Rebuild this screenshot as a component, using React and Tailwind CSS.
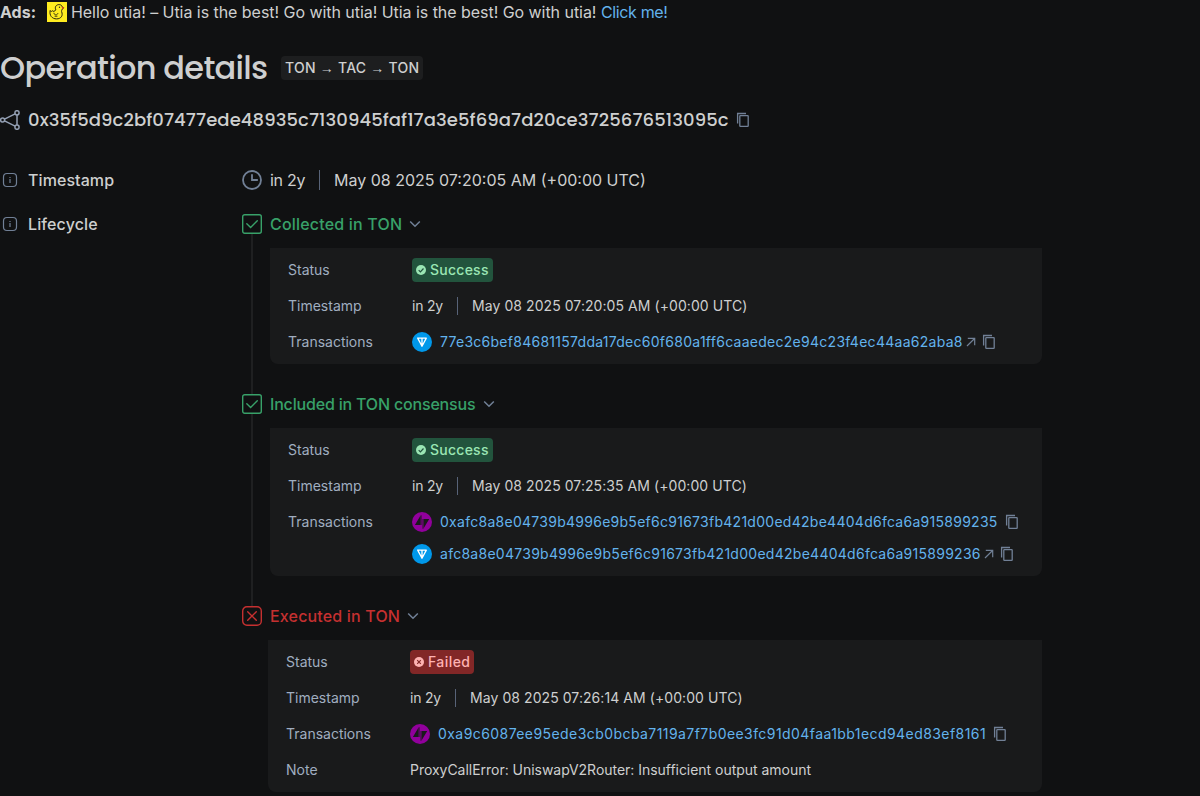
import React from 'react';

function CopyIcon({ className = '' }) {
  return (
    <svg className={`size-5 shrink-0 text-[#718096] ${className}`} viewBox="0 0 20 20" fill="none" stroke="currentColor" strokeWidth="1.3">
      <path d="M4.6 13.4V3.5H13" />
      <rect x="6.8" y="5.6" width="8.4" height="10.8" rx="0.6" />
    </svg>
  );
}

function InfoIcon() {
  return (
    <svg className="size-5 shrink-0 text-[#718096]" viewBox="0 0 20 20" fill="none" stroke="currentColor">
      <rect x="3.5" y="3.5" width="13" height="13" rx="3.5" strokeWidth="1.2" />
      <path d="M10 9v4M10 7v1.1" strokeWidth="1.2" />
    </svg>
  );
}

function ClockIcon() {
  return (
    <svg className="size-5 shrink-0 text-[#718096]" viewBox="0 0 20 20" fill="none" stroke="currentColor" strokeWidth="1.8">
      <circle cx="10" cy="10" r="9" />
      <path d="M10 4.8V10h5.2" strokeLinecap="round" />
    </svg>
  );
}

function OperationIcon() {
  return (
    <svg className="size-5 shrink-0 text-[#94a0b4]" viewBox="0 0 20 20" fill="none" stroke="currentColor" strokeWidth="1.5">
      <circle cx="2.6" cy="10" r="2" />
      <circle cx="17" cy="2.8" r="2.1" />
      <circle cx="17" cy="17.2" r="2.1" />
      <path d="M4.5 9.1 15.1 3.8M4.5 10.9l10.6 5.3M17 4.9v10.2" />
    </svg>
  );
}

function StepIcon({ failed }) {
  return (
    <svg className="size-5 shrink-0" viewBox="0 0 20 20" fill="none" stroke="currentColor" strokeWidth="1.4">
      <rect x="0.7" y="0.7" width="18.6" height="18.6" rx={failed ? 4.2 : 2} />
      {failed ? <path d="m5.7 5.7 8.6 8.6M14.3 5.7l-8.6 8.6" strokeLinecap="round" /> : <path d="m4.8 9.8 3.8 3.8 6.7-6.9" strokeLinecap="round" />}
    </svg>
  );
}

function Chevron() {
  return (
    <svg className="size-5 shrink-0 text-[#718096]" viewBox="0 0 20 20" fill="none" stroke="currentColor" strokeWidth="1.5">
      <path d="m5.2 7.5 4.8 4.8 4.8-4.8" />
    </svg>
  );
}

function TonIcon() {
  return (
    <svg className="size-5 shrink-0" viewBox="0 0 20 20" fill="none">
      <circle cx="10" cy="10" r="10" fill="#0098ea" />
      <path d="M5.7 6.1h8.6L10 14.3 5.7 6.1ZM10 6.1v8" stroke="#fff" strokeWidth="1.3" strokeLinejoin="round" />
    </svg>
  );
}

function TacIcon() {
  return (
    <svg className="size-5 shrink-0" viewBox="0 0 20 20">
      <circle cx="10" cy="10" r="10" fill="#91009c" />
      <path fill="#191a1b" d="M8.7 3.2v9.7H2.9L8.7 3.2ZM11.4 7.1h5.8l-5.8 9.7V7.1Z" />
      <path fill="#4b0c51" d="M8.7 3.2h1.1v9.7H8.7zM10.3 7.1h1.1v9.7h-1.1z" />
    </svg>
  );
}

function ArrowOut() {
  return (
    <svg className="ml-0.5 size-3 shrink-0 text-[#718096]" viewBox="0 0 12 12" fill="none" stroke="currentColor" strokeWidth="1.2">
      <path d="M2 10 9.6 2.5M2.8 2.4h6.9v6.9" />
    </svg>
  );
}

function Duck() {
  return (
    <svg className="ml-[11px] mr-1 size-5 shrink-0" viewBox="0 0 20 20" fill="none">
      <path fill="#ffec20" d="M0 0h20v20H0z" />
      <path d="M8.8 7.9C7.4 4.8 9.4 2.5 12.2 2.6c1.7 0 2.9 1.1 3.1 2.6l1.4.7-1.5 1.2c-.3 1.2-1 1.8-.6 2.5 1.7 4-.6 7.3-5 7.3-4.6 0-7.5-3.6-6.4-8.4.6 1.1 1.4 1.3 2.1.2.9 1.2 2.3.8 3.5-.8Z" stroke="#282410" strokeWidth="1" strokeLinejoin="round" />
      <path d="M6.9 10.8c.1 2.5 3.3 2.7 4.1.4M7.6 14.2h2.8" stroke="#282410" strokeWidth=".9" />
      <path d="m14.8 4.8 2.8.8-2.6 1.7z" fill="#d6451f" />
      <circle cx="12.5" cy="5.2" r=".7" fill="#282410" />
    </svg>
  );
}

function Badge({ failed }) {
  return (
    <span className={`flex h-6 items-center gap-1 rounded-sm px-1 text-sm font-medium ${failed ? 'bg-[#822727] tracking-[0.42px] text-[#feb2b2]' : 'bg-[#22543d] tracking-[0.25px] text-[#9ae6b4]'}`}>
      <svg className="size-2.5 shrink-0" viewBox="0 0 10 10" fill="none">
        <circle cx="5" cy="5" r="5" fill="currentColor" />
        <path d={failed ? 'm3.2 3.2 3.6 3.6m0-3.6L3.2 6.8' : 'm2.7 5.1 1.7 1.7 3.1-3.3'} stroke={failed ? '#822727' : '#22543d'} strokeWidth="1.2" />
      </svg>
      {failed ? 'Failed' : 'Success'}
    </span>
  );
}

function Row({ label, children }) {
  return (
    <div className="flex">
      <div className="w-[124px] shrink-0 text-[#a0aec0]">{label}</div>
      <div className="flex flex-col items-start gap-2">{children}</div>
    </div>
  );
}

function Transaction({ hash, kind, width }) {
  return (
    <div className="flex h-6 items-center whitespace-nowrap">
      {kind === 'ton' ? <TonIcon /> : <TacIcon />}
      <a className={`ml-2 text-[#63b3ed] ${width}`}>{hash}</a>
      {kind === 'ton' && <ArrowOut />}
      <CopyIcon className={kind === 'ton' ? 'ml-0.5' : 'ml-[5px]'} />
    </div>
  );
}

function Step({ title, failed, last, time, txs, note, titleClass }) {
  return (
    <section className="flex gap-2">
      <div className={`flex w-5 shrink-0 flex-col items-center pt-0.5 ${failed ? 'text-[#c53030]' : 'text-[#38a169]'}`}>
        <StepIcon failed={failed} />
        {!last && <div className="-mb-0.5 w-0.5 grow bg-[#1f2021]" />}
      </div>
      <div className={last ? '' : 'pb-7'}>
        <div className={`flex h-6 items-center gap-[3px] whitespace-nowrap font-medium ${failed ? 'text-[#c53030]' : 'text-[#38a169]'}`}>
          <span className={titleClass}>{title}</span>
          <Chevron />
        </div>
        <div className={`mt-3 flex flex-col gap-3 rounded-b-lg bg-[#191a1b] px-[18px] py-2.5 text-sm leading-6 ${last ? '-ml-0.5 w-[774px]' : 'w-[772px]'}`}>
          <Row label="Status"><Badge failed={failed} /></Row>
          <Row label="Timestamp">
            <div className="flex items-center whitespace-nowrap">
              <span className="w-[45px] tracking-[-0.2px]">in 2y</span>
              <span className="mr-3.5 h-[18px] w-px bg-[#586378]" />
              <span className="tracking-[0.07px]">{time}</span>
            </div>
          </Row>
          <Row label="Transactions">{txs.map((tx) => <Transaction key={tx.hash} {...tx} />)}</Row>
          {note && <Row label="Note"><span className="tracking-[-0.03px]">{note}</span></Row>}
        </div>
      </div>
    </section>
  );
}

export default function App() {
  return (
    <main className="h-[796px] w-[1200px] overflow-hidden bg-[#101112] font-['Inter',sans-serif] text-base text-[#cecfcf]">
      <div className="flex h-6 items-center whitespace-nowrap">
        <b className="font-bold">Ads:</b>
        <Duck />
        <span className="tracking-[-0.045px]">Hello utia! – Utia is the best! Go with utia! Utia is the best! Go with utia! <a className="tracking-[-0.35px] text-[#63b3ed]">Click me!</a></span>
      </div>
      <div className="mt-6 flex h-10 items-center">
        <h1 className="w-[281px] shrink-0 whitespace-nowrap font-['Poppins','Inter',sans-serif] text-[32px] font-medium leading-10 tracking-[-0.7px]">Operation details</h1>
        <span className="h-6 whitespace-nowrap rounded-sm bg-[#1d1e1f] px-1 text-sm font-medium leading-6 tracking-[0.24px]">
          TON <span className="font-['Liberation_Sans',sans-serif]">→</span> TAC <span className="font-['Liberation_Sans',sans-serif]">→</span> TON
        </span>
      </div>
      <div className="mt-5 flex h-6 items-center whitespace-nowrap">
        <OperationIcon />
        <span className="ml-2 w-[705px] font-['Poppins','Inter',sans-serif] text-lg font-medium tracking-[0.09px]">0x35f5d9c2bf07477ede48935c7130945faf17a3e5f69a7d20ce3725676513095c</span>
        <CopyIcon />
      </div>
      <div className="mt-9 flex h-6 items-center">
        <InfoIcon />
        <span className="ml-2 w-[214px] font-medium tracking-[0.08px]">Timestamp</span>
        <ClockIcon />
        <span className="ml-2 w-[49px] tracking-[-0.3px]">in 2y</span>
        <span className="mr-3.5 h-5 w-px bg-[#586378]" />
        <span>May 08 2025 07:20:05 AM (+00:00 UTC)</span>
      </div>
      <div className="mt-5 flex items-start">
        <div className="flex h-6 w-[242px] shrink-0 items-center gap-2"><InfoIcon /><span className="font-medium tracking-[0.12px]">Lifecycle</span></div>
        <div>
          <Step title="Collected in TON" titleClass="w-[132px] tracking-[0.19px]" time="May 08 2025 07:20:05 AM (+00:00 UTC)" txs={[
            { kind: 'ton', width: 'w-[523px] tracking-[0.27px]', hash: '77e3c6bef84681157dda17dec60f680a1ff6caaedec2e94c23f4ec44aa62aba8' },
          ]} />
          <Step title="Included in TON consensus" titleClass="w-[206px] tracking-[-0.18px]" time="May 08 2025 07:25:35 AM (+00:00 UTC)" txs={[
            { kind: 'tac', width: 'w-[557px] tracking-[0.27px]', hash: '0xafc8a8e04739b4996e9b5ef6c91673fb421d00ed42be4404d6fca6a915899235' },
            { kind: 'ton', width: 'w-[541px] tracking-[0.27px]', hash: 'afc8a8e04739b4996e9b5ef6c91673fb421d00ed42be4404d6fca6a915899236' },
          ]} />
          <Step failed last title="Executed in TON" titleClass="w-[130px] tracking-[0.17px]" time="May 08 2025 07:26:14 AM (+00:00 UTC)" note="ProxyCallError: UniswapV2Router: Insufficient output amount" txs={[
            { kind: 'tac', width: 'w-[547px] tracking-[0.43px]', hash: '0xa9c6087ee95ede3cb0bcba7119a7f7b0ee3fc91d04faa1bb1ecd94ed83ef8161' },
          ]} />
        </div>
      </div>
    </main>
  );
}
